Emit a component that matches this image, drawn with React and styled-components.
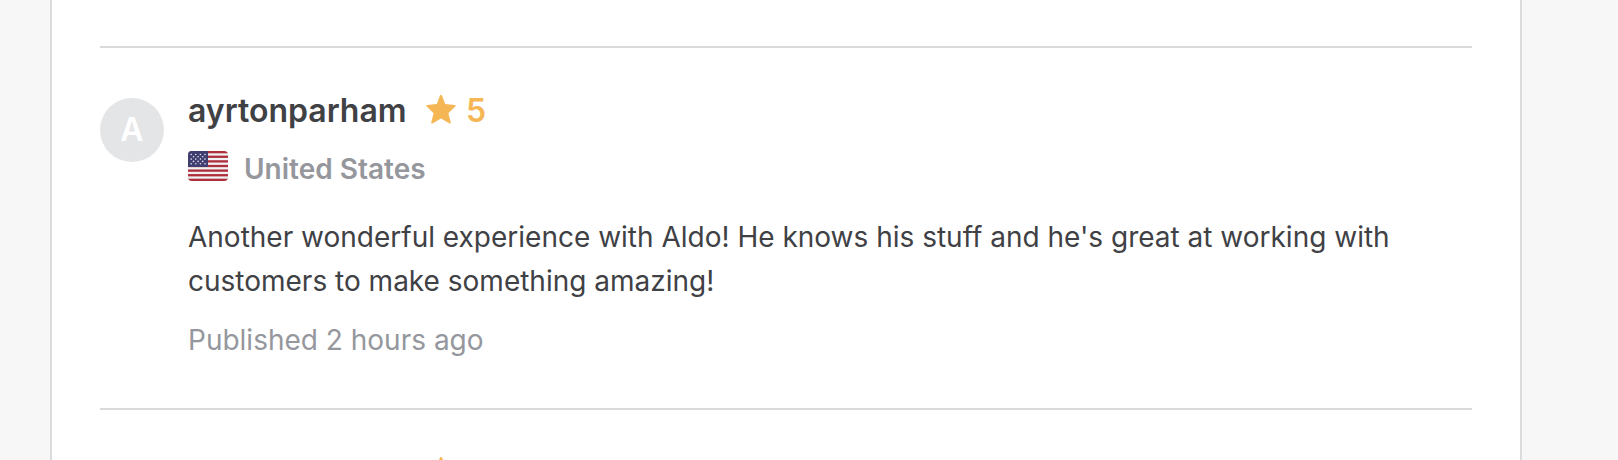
import React from "react";
import styled, { createGlobalStyle } from "styled-components";

const GlobalStyle = createGlobalStyle`
  * {
    box-sizing: border-box;
  }
  body {
    margin: 0;
    background-color: #f7f7f7;
    color: #404145;
    font-family: "Inter", "Liberation Sans", sans-serif;
    font-size: 28px;
  }
`;

const Page = styled.main`
  height: 100vh;
  overflow: hidden;
  padding: 0 96px 0 50px;
`;
const Card = styled.section`
  min-height: 100%;
  padding: 46px 48px 0;
  background-color: white;
  border-left: 2px solid #dadbdd;
  border-right: 2px solid #dadbdd;
`;
const ReviewList = styled.ul`
  list-style: none;
  margin: 0;
  padding: 0;
`;
const ReviewItem = styled.li`
  display: flex;
  align-items: flex-start;
  gap: 24px;
  padding: 50px 0;
  border-top: 2px solid #dadada;
`;
const Avatar = styled.div`
  display: flex;
  flex: none;
  align-items: center;
  justify-content: center;
  width: 64px;
  height: 64px;
  border-radius: 50%;
  background-color: #e4e5e7;
  color: white;
  font-size: 32px;
  font-weight: 600;
  line-height: 32px;
`;
const AvatarSpace = styled.div`
  flex: none;
  width: 64px;
`;
const ReviewBody = styled.div`
  flex: 1;
  min-width: 0;
`;
const Header = styled.div`
  display: flex;
  align-items: center;
  gap: 19px;
  height: 26px;
  font-size: 32px;
  line-height: 26px;
`;
const UserName = styled.h3`
  min-width: 219px;
  margin: 0;
  font-size: 32px;
  font-weight: 600;
`;
const Rating = styled.div`
  display: flex;
  align-items: center;
  gap: 10px;
  color: #f5b656;
  font-weight: 600;
`;
const StarSvg = styled.svg`
  display: block;
  width: 30px;
  height: 32px;
`;
const Country = styled.div`
  display: flex;
  gap: 16px;
  margin-top: 27px;
  color: #95979d;
  font-weight: 600;
  line-height: 36px;
`;
const FlagSvg = styled.svg`
  display: block;
  width: 40px;
  height: 30px;
`;
const Comment = styled.p`
  margin: 28px 0 19px;
  line-height: 44px;
`;
const Published = styled.time`
  display: block;
  color: #95979d;
  line-height: 36px;
`;

const Star = () => (
  <StarSvg viewBox="0 0 30 32" fill="currentColor" aria-hidden="true">
    <path d="M14 0.6Q15 -0.8 16 0.6L19.2 9L28.9 10Q30.4 10.3 29.3 11.4L22.4 18.2L24.8 27.4Q25 29 23.6 28.4L15 23.6L6.4 28.4Q5 29 5.2 27.4L7.6 18.2L0.7 11.4Q-0.4 10.3 1.1 10L10.8 9Z" />
  </StarSvg>
);

const stripes = [0, 2, 4, 6, 8, 10, 12];
const starRows = [
  { y: 3.5, xs: [3.2, 7.8, 12.4, 17] },
  { y: 5.8, xs: [5.5, 10.1, 14.7] },
  { y: 8.1, xs: [3.2, 7.8, 12.4, 17] },
  { y: 10.4, xs: [5.5, 10.1, 14.7] },
  { y: 12.7, xs: [3.2, 7.8, 12.4, 17] },
];

const Flag = () => (
  <FlagSvg viewBox="0 0 40 30" aria-hidden="true">
    <clipPath id="flag-shape">
      <rect width="40" height="30" rx="4" />
    </clipPath>
    <g clipPath="url(#flag-shape)">
      <rect width="40" height="30" fill="#f1f0f2" />
      {stripes.map((n) => (
        <rect
          key={n}
          y={(n * 30) / 13}
          width="40"
          height={30 / 13}
          fill="#ad2f3c"
        />
      ))}
      <rect width="20" height="16" fill="#403e70" />
      {starRows.map(({ y, xs }) =>
        xs.map((x) => (
          <circle key={`${x}-${y}`} cx={x} cy={y} r="0.8" fill="#e3e3ec" />
        ))
      )}
    </g>
  </FlagSvg>
);

const App = () => {
  return (
    <>
      <GlobalStyle />
      <Page>
        <Card>
          <ReviewList>
            <ReviewItem>
              <Avatar>A</Avatar>
              <ReviewBody>
                <Header>
                  <UserName>ayrtonparham</UserName>
                  <Rating>
                    <Star />5
                  </Rating>
                </Header>
                <Country>
                  <Flag />
                  United States
                </Country>
                <Comment>
                  Another wonderful experience with Aldo! He knows his stuff and
                  he's great at working with customers to make something
                  amazing!
                </Comment>
                <Published>Published 2 hours ago</Published>
              </ReviewBody>
            </ReviewItem>
            <ReviewItem>
              <AvatarSpace />
              <ReviewBody>
                <Header>
                  <UserName />
                  <Rating>
                    <Star />
                  </Rating>
                </Header>
              </ReviewBody>
            </ReviewItem>
          </ReviewList>
        </Card>
      </Page>
    </>
  );
};

export default App;
